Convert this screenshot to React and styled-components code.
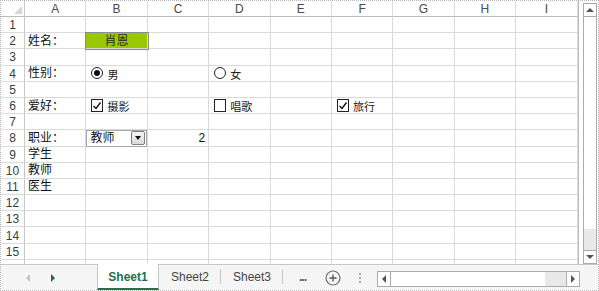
import React from 'react'
import styled, { createGlobalStyle } from 'styled-components'

const GlobalStyle = createGlobalStyle`
  html, body {
    margin: 0;
    padding: 0;
    background: #fff;
  }
  * {
    box-sizing: border-box;
  }
`

const COLS = ['A', 'B', 'C', 'D', 'E', 'F', 'G', 'H', 'I']
const ROWS = Array.from({ length: 16 }, (_, i) => i + 1)

const cells = {
  '2A': { kind: 'text', text: '姓名：' },
  '2B': { kind: 'fill', text: '肖恩' },
  '4A': { kind: 'text', text: '性别：' },
  '4B': { kind: 'radio', checked: true, label: '男' },
  '4D': { kind: 'radio', checked: false, label: '女' },
  '6A': { kind: 'text', text: '爱好：' },
  '6B': { kind: 'check', checked: true, label: '摄影' },
  '6D': { kind: 'check', checked: false, label: '唱歌' },
  '6F': { kind: 'check', checked: true, label: '旅行' },
  '8A': { kind: 'text', text: '职业：' },
  '8B': { kind: 'combo', text: '教师' },
  '8C': { kind: 'num', text: '2' },
  '9A': { kind: 'text', text: '学生' },
  '10A': { kind: 'text', text: '教师' },
  '11A': { kind: 'text', text: '医生' },
}

const Frame = styled.div`
  width: 599px;
  height: 291px;
  border: 1px dotted #b4b4b4;
  display: flex;
  flex-direction: column;
  overflow: hidden;
  font-family: "Liberation Sans", "Noto Sans CJK SC", sans-serif;
`

const Body = styled.div`
  flex: 1;
  display: flex;
  min-height: 0;
`

const Sheet = styled.div`
  flex: 1;
  overflow: hidden;
  border-right: 1px solid #b9b9b9;
`

const Grid = styled.div`
  display: grid;
  grid-template-columns: 24px repeat(9, 61.4px);
  grid-template-rows: 16px repeat(16, 16.2px);
`

const Corner = styled.div`
  border-right: 1px solid #c8c8c8;
  border-bottom: 1px solid #bcbcbc;
  display: flex;
  align-items: flex-end;
  justify-content: flex-end;
  padding: 0 2px 2px 0;

  &::after {
    content: '';
    width: 0;
    height: 0;
    border-left: 8px solid transparent;
    border-bottom: 8px solid #d6d6d6;
  }
`

const ColHead = styled.div`
  border-right: 1px solid #dedede;
  border-bottom: 1px solid #bcbcbc;
  display: flex;
  align-items: center;
  justify-content: center;
  font-size: 12px;
  color: #4a4a4a;
`

const RowHead = styled.div`
  border-right: 1px solid #c8c8c8;
  border-bottom: 1px solid #dadada;
  display: flex;
  align-items: center;
  justify-content: center;
  font-size: 12px;
  color: #3c3c3c;
  padding-top: 1px;
`

const Cell = styled.div`
  border-right: 1px solid #dadada;
  border-bottom: 1px solid #dadada;
  display: flex;
  align-items: center;
  justify-content: ${(p) => (p.$align === 'right' ? 'flex-end' : p.$align === 'center' ? 'center' : 'flex-start')};
  padding: ${(p) => (p.$flush ? '0' : '0 3px 0 3px')};
  font-family: "Liberation Sans", "Noto Sans CJK SC", sans-serif;
  font-size: 12px;
  line-height: 14px;
  color: #111;
  white-space: nowrap;
  background: ${(p) => (p.$fill ? '#99c700' : 'transparent')};
  box-shadow: ${(p) => (p.$fill ? '0 0 0 1px #8c8c8c' : 'none')};
  position: ${(p) => (p.$fill ? 'relative' : 'static')};
  z-index: ${(p) => (p.$fill ? 1 : 'auto')};
`

const FillText = styled.span`
  color: #2a2a2a;
  font-size: 12px;
`

const Control = styled.div`
  display: flex;
  align-items: center;
  padding-left: 2px;
`

const RadioMark = styled.span`
  width: 12px;
  height: 12px;
  border-radius: 50%;
  border: 1px solid #222;
  background: #fff;
  display: flex;
  align-items: center;
  justify-content: center;

  &::after {
    content: '';
    width: 6px;
    height: 6px;
    border-radius: 50%;
    background: ${(p) => (p.$checked ? '#111' : 'transparent')};
  }
`

const CheckMark = styled.span`
  width: 12px;
  height: 13px;
  border: 1px solid #222;
  background: #fff;
  display: flex;
  align-items: center;
  justify-content: center;
`

const ControlLabel = styled.span`
  font-size: 11px;
  margin-left: 4px;
  padding-top: 3px;
  color: #222;
`

const Combo = styled.div`
  flex: 1;
  height: 17px;
  margin-top: 1px;
  border: 1px solid #a6a6a6;
  background: #fff;
  display: flex;
  align-items: center;
  justify-content: space-between;
  padding: 0 1px 0 3px;
  font-size: 12px;
  color: #111;
`

const DropButton = styled.span`
  width: 14px;
  height: 14px;
  border: 1px solid #7f7f7f;
  border-radius: 2px;
  background: linear-gradient(#f6f6f6, #d9d9d9);
  display: flex;
  align-items: center;
  justify-content: center;

  &::after {
    content: '';
    width: 0;
    height: 0;
    border-left: 3.5px solid transparent;
    border-right: 3.5px solid transparent;
    border-top: 4px solid #111;
  }
`

const VScroll = styled.div`
  width: 19px;
  display: flex;
  padding: 2px 1px 0 4px;
`

const ScrollTrack = styled.div`
  flex: 1;
  display: flex;
  flex-direction: ${(p) => (p.$horizontal ? 'row' : 'column')};
  border: 1px solid #ababab;
  background: #fff;
`

const ScrollButton = styled.span`
  flex: 0 0 13px;
  display: flex;
  align-items: center;
  justify-content: center;
  background: #fff;
  border-color: #ababab;
  border-style: solid;
  border-width: ${(p) =>
    p.$dir === 'up' ? '0 0 1px 0' : p.$dir === 'down' ? '1px 0 0 0' : p.$dir === 'left' ? '0 1px 0 0' : '0 0 0 1px'};

  &::after {
    content: '';
    width: 0;
    height: 0;
    ${(p) =>
      p.$dir === 'up'
        ? 'border-left: 4px solid transparent; border-right: 4px solid transparent; border-bottom: 4px solid #555;'
        : p.$dir === 'down'
        ? 'border-left: 4px solid transparent; border-right: 4px solid transparent; border-top: 4px solid #555;'
        : p.$dir === 'left'
        ? 'border-top: 4px solid transparent; border-bottom: 4px solid transparent; border-right: 4px solid #555;'
        : 'border-top: 4px solid transparent; border-bottom: 4px solid transparent; border-left: 4px solid #555;'}
  }
`

const Thumb = styled.span`
  flex: 1;
  background: #fff;
`

const Gutter = styled.span`
  flex: 0 0 21px;
  background: #e8e8e8;
`

const TabBar = styled.div`
  height: 26px;
  border-top: 1px solid #c6c6c6;
  background: #f5f5f5;
  display: flex;
  align-items: stretch;
`

const Nav = styled.div`
  width: 96px;
  display: flex;
  align-items: center;
  padding-left: 25px;
  gap: 21px;
`

const NavArrow = styled.span`
  width: 0;
  height: 0;
  border-top: 4px solid transparent;
  border-bottom: 4px solid transparent;
  ${(p) => (p.$dir === 'left' ? 'border-right: 4px solid #c4c4c4;' : 'border-left: 4px solid #1d6b3f;')}
`

const Tab = styled.div`
  width: 62px;
  display: flex;
  align-items: center;
  justify-content: center;
  position: relative;
  font-family: "Liberation Sans", sans-serif;
  font-size: 12px;
  font-weight: ${(p) => (p.$active ? 700 : 400)};
  color: ${(p) => (p.$active ? '#1e7145' : '#444')};
  background: ${(p) => (p.$active ? '#fff' : 'transparent')};
  border-left: ${(p) => (p.$active ? '1px solid #c6c6c6' : 'none')};
  border-right: ${(p) => (p.$active ? '1px solid #c6c6c6' : 'none')};
  border-bottom: ${(p) => (p.$active ? '2px solid #217346' : '2px solid transparent')};
  margin-top: ${(p) => (p.$active ? '-1px' : '0')};
  padding-top: ${(p) => (p.$active ? '1px' : '0')};

  &::after {
    content: '';
    display: ${(p) => (p.$sep ? 'block' : 'none')};
    position: absolute;
    right: 0;
    top: 4px;
    height: 15px;
    width: 1px;
    background: #c6c6c6;
  }
`

const More = styled.div`
  width: 39px;
  display: flex;
  align-items: center;
  justify-content: center;
  color: #217346;
  font-weight: 700;
  font-size: 12px;
  letter-spacing: -1px;
  padding-bottom: 2px;
`

const AddSheet = styled.div`
  width: 21px;
  display: flex;
  align-items: center;
  justify-content: center;
`

const Splitter = styled.div`
  width: 34px;
  display: flex;
  flex-direction: column;
  align-items: center;
  justify-content: center;
  gap: 2px;

  span {
    width: 2px;
    height: 2px;
    background: #a8a8a8;
  }
`

const HScroll = styled.div`
  width: 203px;
  display: flex;
  padding: 6px 0 3px 0;
`

const renderContent = (c) => {
  if (!c) return null
  switch (c.kind) {
    case 'fill':
      return <FillText>{c.text}</FillText>
    case 'radio':
      return (
        <Control>
          <RadioMark $checked={c.checked} />
          <ControlLabel>{c.label}</ControlLabel>
        </Control>
      )
    case 'check':
      return (
        <Control>
          <CheckMark>
            {c.checked && (
              <svg width="10" height="10" viewBox="0 0 10 10">
                <polyline points="1.5,5 4,7.5 8.5,1.5" fill="none" stroke="#111" strokeWidth="1.4" />
              </svg>
            )}
          </CheckMark>
          <ControlLabel>{c.label}</ControlLabel>
        </Control>
      )
    case 'combo':
      return (
        <Combo>
          <span>{c.text}</span>
          <DropButton />
        </Combo>
      )
    default:
      return c.text
  }
}

const App = () => {
  return (
    <>
      <GlobalStyle />
      <Frame>
        <Body>
          <Sheet>
            <Grid>
              <Corner />
              {COLS.map((col) => (
                <ColHead key={col}>{col}</ColHead>
              ))}
              {ROWS.map((row) => (
                <React.Fragment key={row}>
                  {/* the last row is only a sliver, its number is hidden under the tab bar */}
                  <RowHead>{row < 16 ? row : ''}</RowHead>
                  {COLS.map((col) => {
                    const c = cells[`${row}${col}`]
                    return (
                      <Cell
                        key={col}
                        $fill={c && c.kind === 'fill'}
                        $flush={c && c.kind === 'combo'}
                        $align={c && c.kind === 'num' ? 'right' : c && c.kind === 'fill' ? 'center' : 'left'}
                      >
                        {renderContent(c)}
                      </Cell>
                    )
                  })}
                </React.Fragment>
              ))}
            </Grid>
          </Sheet>
          <VScroll>
            <ScrollTrack>
              <ScrollButton $dir="up" />
              <Thumb />
              <Gutter />
              <ScrollButton $dir="down" />
            </ScrollTrack>
          </VScroll>
        </Body>
        <TabBar>
          <Nav>
            <NavArrow $dir="left" />
            <NavArrow $dir="right" />
          </Nav>
          <Tab $active>Sheet1</Tab>
          <Tab $sep>Sheet2</Tab>
          <Tab $sep>Sheet3</Tab>
          <More>...</More>
          <AddSheet>
            <svg width="16" height="16" viewBox="0 0 16 16">
              <circle cx="8" cy="8" r="7" fill="none" stroke="#6d6d6d" strokeWidth="1.2" />
              <path d="M8 4.5v7M4.5 8h7" stroke="#555" strokeWidth="1.3" />
            </svg>
          </AddSheet>
          <Splitter>
            <span />
            <span />
            <span />
          </Splitter>
          <HScroll>
            <ScrollTrack $horizontal>
              <ScrollButton $dir="left" />
              <Thumb />
              <Gutter />
              <ScrollButton $dir="right" />
            </ScrollTrack>
          </HScroll>
        </TabBar>
      </Frame>
    </>
  )
}

export default App
